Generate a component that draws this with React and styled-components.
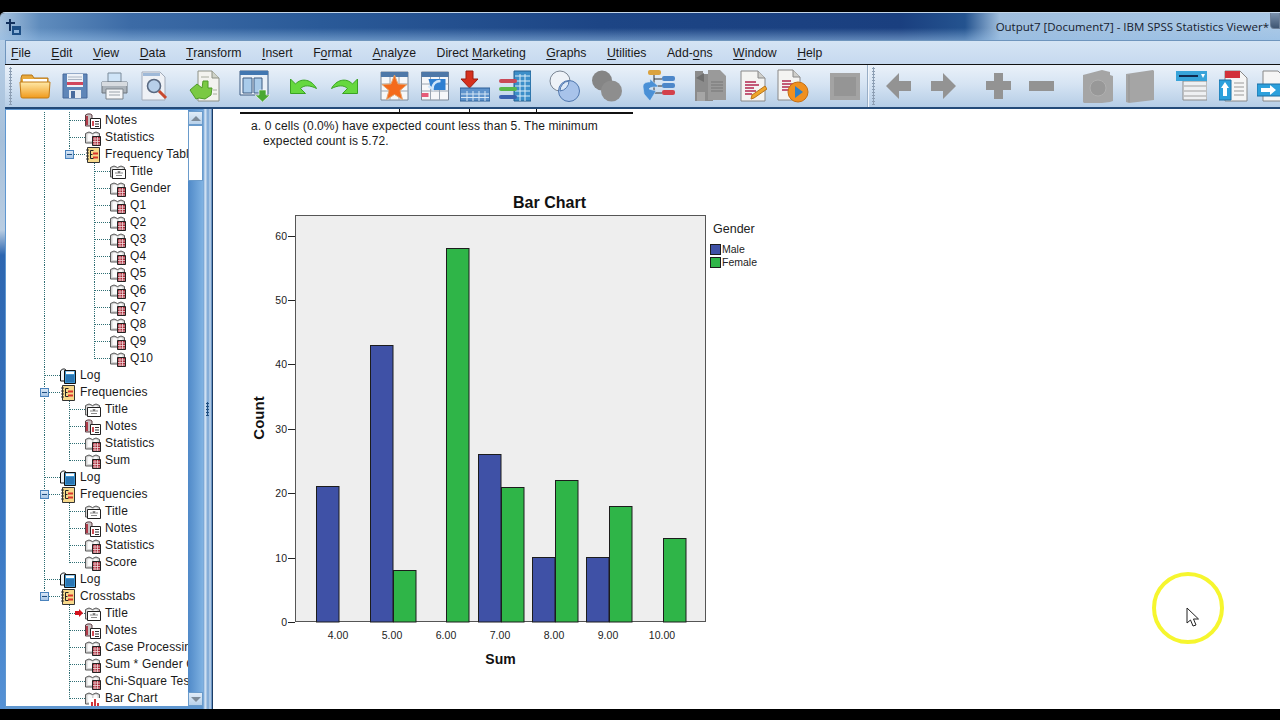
import React from "react";
import styled, { createGlobalStyle } from "styled-components";

const GlobalStyle = createGlobalStyle`
  html, body { margin: 0; padding: 0; background: #000; }
  * { box-sizing: border-box; }
`;

/* ---------- toolbar drawings ---------- */

const Folder = () => (
  <svg width="32" height="28" viewBox="0 0 32 28">
    <defs>
      <linearGradient id="fo" x1="0" y1="0" x2="0" y2="1">
        <stop offset="0" stopColor="#ffe9a8" />
        <stop offset="1" stopColor="#f09a1c" />
      </linearGradient>
    </defs>
    <path d="M2 6l1-3h10l2 3h14v5H2z" fill="#e8a93c" stroke="#b5761a" />
    <path d="M4 7h24v3H4z" fill="#fff" />
    <path d="M1 10h30l-1 15q0 1-2 1H4q-2 0-2-1z" fill="url(#fo)" stroke="#c47c15" />
  </svg>
);
const Save = () => (
  <svg width="26" height="28" viewBox="0 0 26 28">
    <path d="M1 2h24v24H1z" fill="#5f86b8" stroke="#47689a" />
    <path d="M5 2h16v13H5z" fill="#eef2f7" />
    <path d="M5 10h16v3H5z" fill="#d2475c" />
    <path d="M6 5h14M6 7.500h14" stroke="#aab5c4" />
    <path d="M7 18h12v8H7z" fill="#e6ebf2" />
    <path d="M9 19h4v7H9z" fill="#4a6c9e" />
  </svg>
);
const Printer = () => (
  <svg width="27" height="28" viewBox="0 0 27 28">
    <path d="M7 1h13v9H7z" fill="#cfe4f7" stroke="#7b8a99" />
    <path d="M1 10h25v11H1z" fill="#aab2ba" stroke="#6c747c" />
    <path d="M1 10h25v4H1z" fill="#d7dbe0" />
    <path d="M5 17h17v10H5z" fill="#f5f6f8" stroke="#7d858d" />
    <path d="M8 20h11M8 23h11" stroke="#9aa2aa" />
  </svg>
);
const Preview = () => (
  <svg width="27" height="30" viewBox="0 0 27 30">
    <path d="M1 1h18l5 5v23H1z" fill="#eef1f6" stroke="#a2abb9" />
    <path d="M2 2h17v3H2z" fill="#9fb9d8" />
    <circle cx="13" cy="15" r="6.500" fill="#b7cfe9" stroke="#5a6a82" strokeWidth="1.600" />
    <path d="M18 20l7 7" stroke="#c8492e" strokeWidth="3" />
  </svg>
);
const ExportDoc = () => (
  <svg width="32" height="32" viewBox="0 0 32 32">
    <path d="M9 1h14l7 7v23H9z" fill="#f3f3ef" stroke="#8d9186" />
    <path d="M23 1v7h7" fill="#cfd3c8" stroke="#8d9186" />
    <path d="M14 11h5v7h4l-1 7-6 4-6-1-3 1-6-9 7-6 5 4z" fill="#7ac943" stroke="#4f9a28" />
    <path d="M24 20h4M24 24h4M12 7h8" stroke="#a8ac9f" />
  </svg>
);
const Designate = () => (
  <svg width="31" height="32" viewBox="0 0 31 32">
    <path d="M1 1h28v24H1z" fill="#e9f0f8" stroke="#3c5a80" />
    <path d="M1 1h28v4H1z" fill="#4176b0" />
    <path d="M4 8h9v15H4zM15 8h8v15h-8z" fill="#a9cbea" stroke="#3c5a80" />
    <path d="M20 20h7v5h4l-7.500 7L16 25h4z" fill="#4aa832" stroke="#fff" strokeWidth=".6" />
  </svg>
);
const Undo = () => (
  <svg width="27" height="18" viewBox="0 0 27 18">
    <path d="M.5 2v14.500h15l-5-5c4-4 10-3 16 0C22 3 12 0 5.500 7z" fill="#66d83f" stroke="#3aa322" />
  </svg>
);
const Redo = () => (
  <svg width="27" height="18" viewBox="0 0 27 18">
    <path d="M26.500 2v14.500h-15l5-5c-4-4-10-3-16 0C5 3 15 0 21.500 7z" fill="#66d83f" stroke="#3aa322" />
  </svg>
);
const TableBase = () => (
  <>
    <path d="M1 1h27v28H1z" fill="#f6f7f9" stroke="#7b8797" />
    <path d="M1 1h27v5H1z" fill="#4e78a8" />
    <path d="M1 13h27M1 20h27M10 6v23M19 6v23" stroke="#9aa5b2" />
  </>
);
const StarTable = () => (
  <svg width="29" height="30" viewBox="0 0 29 30">
    <TableBase />
    <path d="M14.500 4l3.500 9 9 .5-7 6 2.500 9-8-5-8 5 2.500-9-7-6 9-.5z" fill="#f46a1c" stroke="#e2a36d" />
  </svg>
);
const GotoTable = () => (
  <svg width="30" height="30" viewBox="0 0 29 30">
    <TableBase />
    <path d="M8 8h17v11H11z" fill="#2f7fd1" />
    <path d="M20 10c-5 0-8 3-8 8l-4-3" fill="none" stroke="#cfe5fa" strokeWidth="2.500" />
    <path d="M1 22h7v4H1z" fill="#e65a78" />
  </svg>
);
const InsertTable = () => (
  <svg width="30" height="32" viewBox="0 0 30 32">
    <path d="M6 1h7v8h5l-8.500 9L1 9h5z" fill="#d5301d" stroke="#9d1c10" />
    <path d="M0 18h30v13H0z" fill="#5e93cc" stroke="#2c5f96" />
    <path d="M1 24h28M1 27.500h28M7 21v10M13 21v10M19 21v10M25 21v10" stroke="#d8e8f6" />
  </svg>
);
const ListTable = () => (
  <svg width="32" height="32" viewBox="0 0 32 32">
    <path d="M15 1h17v30H15z" fill="#3c8fc9" stroke="#245f8e" />
    <path d="M16 6h15M16 11h15M16 16h15M16 21h15M16 26h15M21 4v27M26 4v27" stroke="#d9eef9" />
    <rect x="0" y="9" width="18" height="4" rx="2" fill="#c94a58" />
    <rect x="0" y="17" width="18" height="4" rx="2" fill="#58b84a" />
    <rect x="0" y="25" width="18" height="4" rx="2" fill="#3a62b0" />
  </svg>
);
const Circles = () => (
  <svg width="31" height="32" viewBox="0 0 31 32">
    <circle cx="11" cy="11" r="10" fill="#eef2f8" stroke="#7b8593" />
    <circle cx="20" cy="21" r="10.500" fill="#a8c3ea" stroke="#5077ad" />
    <path d="M11 21a10 10 0 0 1 9-10 10 10 0 0 1-9 10z" fill="#dce8f7" stroke="#5077ad" />
  </svg>
);
const GrayCircles = () => (
  <svg width="30" height="32" viewBox="0 0 30 32">
    <circle cx="10" cy="10.500" r="10" fill="#858585" />
    <circle cx="19.500" cy="21" r="10.500" fill="#8e8e8e" />
  </svg>
);
const FlowIcon = () => (
  <svg width="34" height="34" viewBox="0 0 34 34">
    <rect x="6" y="1" width="13" height="5" rx="2" fill="#dba23e" />
    <path d="M12 6v18M12 10h8M12 17h8M12 24h8" stroke="#333" fill="none" />
    <rect x="20" y="7" width="13" height="5" rx="2" fill="#4d87c9" />
    <rect x="20" y="14" width="13" height="5" rx="2" fill="#4d87c9" />
    <rect x="20" y="21" width="13" height="5" rx="2" fill="#d3404a" />
    <path d="M1 18c0-4 3-5 7-5v-3l8 7-1 1c-3 0-7 0-8 2l7 2-6 10-6-7z" fill="#4a90d6" stroke="#cfe2f5" strokeWidth=".6" />
  </svg>
);
const GrayDoc = () => (
  <svg width="31" height="32" viewBox="0 0 31 32">
    <path d="M0 1h8v30H0zM8 4h10v27H8z" fill="#8b8b8b" />
    <path d="M13 0h12l6 6v24H13z" fill="#9a9a9a" />
    <path d="M16 12h12M16 15h12M16 18h12M16 21h12" stroke="#777" />
    <path d="M2 22h8v9H2z" fill="#a6a6a6" />
    <path d="M1 8l8-5v9z" fill="#6e6e6e" />
  </svg>
);
const PencilDoc = () => (
  <svg width="27" height="32" viewBox="0 0 27 32">
    <path d="M1 1h17l7 7v23H1z" fill="#f4f4f2" stroke="#888" />
    <path d="M18 1v7h7" fill="#cfcfcb" stroke="#888" />
    <path d="M5 12h11M5 15h14M5 18h9M5 21h11M5 24h7" stroke="#b3274f" strokeWidth="1.500" />
    <path d="M12 25l13-9 2 3-13 9-3 1z" fill="#f0a62a" stroke="#b8741a" />
  </svg>
);
const PlayDoc = () => (
  <svg width="32" height="34" viewBox="0 0 32 34">
    <path d="M1 1h15l7 7v23H1z" fill="#f4f4f2" stroke="#888" />
    <path d="M16 1v7h7" fill="#cfcfcb" stroke="#888" />
    <path d="M5 12h9M5 15h12M5 18h8M5 21h9" stroke="#b3274f" strokeWidth="1.500" />
    <circle cx="21" cy="23" r="10" fill="#f09020" stroke="#c46f14" />
    <path d="M18 17l8 6-8 6z" fill="#2d80c8" />
  </svg>
);
const GraySquare = () => (
  <svg width="30" height="27" viewBox="0 0 30 27">
    <path d="M0 0h30v27H0z" fill="#a3a3a3" />
    <path d="M4 4h22v19H4z" fill="#959595" />
  </svg>
);
const ArrowLeft = () => (
  <svg width="25" height="26" viewBox="0 0 25 26">
    <path d="M0 13L13 0v8h12v10H13v8z" fill="#939393" />
  </svg>
);
const ArrowRight = () => (
  <svg width="25" height="26" viewBox="0 0 25 26">
    <path d="M25 13L12 0v8H0v10h12v8z" fill="#939393" />
  </svg>
);
const PlusIcon = () => (
  <svg width="25" height="26" viewBox="0 0 25 26">
    <path d="M8 0h9v8h8v9h-8v9H8v-9H0V8h8z" fill="#939393" />
  </svg>
);
const MinusIcon = () => (
  <svg width="25" height="10" viewBox="0 0 25 10">
    <path d="M0 0h25v10H0z" fill="#939393" />
  </svg>
);
const GrayBoxOpen = () => (
  <svg width="31" height="33" viewBox="0 0 31 33">
    <path d="M1 5l19-5 8 2v3l3 1v25l-3 1-8 1H2l-1-1z" fill="#a5a5a5" />
    <circle cx="16" cy="18" r="8" fill="#989898" stroke="#b0b0b0" />
  </svg>
);
const GrayBox = () => (
  <svg width="28" height="33" viewBox="0 0 28 33">
    <path d="M0 4l27-4 1 1v29l-25 3-3-1z" fill="#a5a5a5" />
    <path d="M3 5v27" stroke="#959595" />
  </svg>
);
const ListDoc = () => (
  <svg width="31" height="30" viewBox="0 0 31 30">
    <path d="M7 10h24v19H7z" fill="#eef0f2" stroke="#8b8b8b" />
    <path d="M8 15h22M8 20h22M8 25h22" stroke="#a0a0a0" />
    <path d="M0 0h31v10H0z" fill="#38a3d9" />
    <path d="M3 5h19" stroke="#10294f" strokeWidth="2" />
    <path d="M25 3h4l-2 4z" fill="#fff" />
  </svg>
);
const UpDoc = () => (
  <svg width="29" height="32" viewBox="0 0 29 32">
    <path d="M6 1h15l7 7v23H6z" fill="#f5f5f5" stroke="#888" />
    <path d="M6 1h15v7H6z" fill="#d2313a" />
    <path d="M15 13h10M15 17h10M15 21h10M15 25h10" stroke="#999" />
    <path d="M0 10h12v20H0z" fill="#2ca0dc" stroke="#1c6ea3" />
    <path d="M6 12l4 6H8v8H4v-8H2z" fill="#fff" />
  </svg>
);
const RightDoc = () => (
  <svg width="32" height="32" viewBox="0 0 32 32">
    <path d="M6 1h15l7 7v23H6z" fill="#f5f5f5" stroke="#888" />
    <path d="M0 14h24v12H0z" fill="#2ca0dc" stroke="#1c6ea3" />
    <path d="M4 18h9v-3l6 5-6 5v-3H4z" fill="#fff" />
  </svg>
);

const toolsLeft = [
  { Icon: Folder, gap: 0 },
  { Icon: Save, gap: 11 },
  { Icon: Printer, gap: 13 },
  { Icon: Preview, gap: 13 },
  { Icon: ExportDoc, gap: 21 },
  { Icon: Designate, gap: 18 },
  { Icon: Undo, gap: 20 },
  { Icon: Redo, gap: 14 },
  { Icon: StarTable, gap: 22 },
  { Icon: GotoTable, gap: 11 },
  { Icon: InsertTable, gap: 10 },
  { Icon: ListTable, gap: 9 },
  { Icon: Circles, gap: 18 },
  { Icon: GrayCircles, gap: 12 },
  { Icon: FlowIcon, gap: 20 },
  { Icon: GrayDoc, gap: 19 },
  { Icon: PencilDoc, gap: 14 },
  { Icon: PlayDoc, gap: 10 },
  { Icon: GraySquare, gap: 21 },
];

const toolsRight = [
  { Icon: ArrowLeft, gap: 0 },
  { Icon: ArrowRight, gap: 20 },
  { Icon: PlusIcon, gap: 30 },
  { Icon: MinusIcon, gap: 18 },
  { Icon: GrayBoxOpen, gap: 28 },
  { Icon: GrayBox, gap: 13 },
  { Icon: ListDoc, gap: 22 },
  { Icon: UpDoc, gap: 12 },
  { Icon: RightDoc, gap: 9 },
];

/* ---------- tree drawings ---------- */

const Book = () => (
  <>
    <path d="M.5 13V3.500q3.500-3 7 0 3.500-3 7 0V13z" fill="#d4d4d4" stroke="#5a5a5a" />
    <path d="M2.500 11V4.500q2.500-1.500 4.500 0V11zM8.500 7V4.500q2-1.500 4 0V7z" fill="#fafafa" />
  </>
);

const StatIcon = () => (
  <svg width="16" height="16" viewBox="0 0 16 16">
    <Book />
    <path d="M7.500 6.500h8v9h-8z" fill="#a82c3a" stroke="#222" />
    <path d="M8 9h7M8 11.500h7M8 14h7M10 7v8M12.500 7v8" stroke="#f3d8da" strokeWidth=".8" />
  </svg>
);
const NotesIcon = () => (
  <svg width="16" height="16" viewBox="0 0 16 16">
    <path d="M.5 2C2 .5 6 .5 7 2v11H.5z" fill="#c9c2c4" stroke="#5c3a40" />
    <path d="M1 3h2v9H1z" fill="#b03a48" />
    <path d="M5.500 5.500h10v10h-10z" fill="#fff" stroke="#222" />
    <path d="M8 8v5" stroke="#c5202a" strokeWidth="1.600" />
    <path d="M10 8.500h4M10 11h4M10 13.500h4" stroke="#333" />
  </svg>
);
const TitleIcon = () => (
  <svg width="16" height="16" viewBox="0 0 16 16">
    <Book />
    <path d="M2.500 5.500h13v9h-13z" fill="#fff" stroke="#222" />
    <path d="M5 9h8M6 11.500h6" stroke="#8a8a8a" />
    <path d="M8 7l1 2 1-2" stroke="#666" fill="none" />
  </svg>
);
const ChartIcon = () => (
  <svg width="16" height="16" viewBox="0 0 16 16">
    <Book />
    <path d="M4 7h11v8.500H4z" fill="#fff" />
    <path d="M6 11h2v4.500H6zM9 8h2v7.500H9zM12 12h2v3.500h-2z" fill="#d2353a" />
  </svg>
);
const LogIcon = () => (
  <svg width="16" height="16" viewBox="0 0 16 16">
    <path d="M.5 3C2 .5 5 .5 6 2v11H.5z" fill="#eef4f9" stroke="#111" />
    <path d="M4.500 2.500h11v13h-11z" fill="#3f97d3" stroke="#111" />
    <path d="M6 3.500h8v2.500H6z" fill="#fff" />
    <path d="M6 7h8v7H6z" fill="#2a76b4" />
  </svg>
);
const GroupIcon = () => (
  <svg width="16" height="16" viewBox="0 0 16 16">
    <path d="M2.500.5h12v15h-12z" fill="#f7d98a" stroke="#333" />
    <path d="M1 3h3M1 6h3M1 9h3M1 12h3" stroke="#333" />
    <path d="M5.500 3.500v8h3M5.500 3.500h3M5.500 7.500h2" stroke="#222" fill="none" />
    <path d="M8 5.500h5v2H8zM8 9.500h5v2H8z" fill="#d8342b" />
  </svg>
);

const t = (label, Icon, level, extra = {}) => ({ label, Icon, level, trunk: true, ...extra });
const stats = (label) => t(label, StatIcon, 3);

const treeRows = [
  t("Notes", NotesIcon, 2),
  t("Statistics", StatIcon, 2),
  t("Frequency Table", GroupIcon, 2, { toggle: true, last: true }),
  t("Title", TitleIcon, 3),
  stats("Gender"),
  stats("Q1"),
  stats("Q2"),
  stats("Q3"),
  stats("Q4"),
  stats("Q5"),
  stats("Q6"),
  stats("Q7"),
  stats("Q8"),
  stats("Q9"),
  t("Q10", StatIcon, 3, { last: true }),
  t("Log", LogIcon, 1),
  t("Frequencies", GroupIcon, 1, { toggle: true }),
  t("Title", TitleIcon, 2),
  t("Notes", NotesIcon, 2),
  t("Statistics", StatIcon, 2),
  t("Sum", StatIcon, 2, { last: true }),
  t("Log", LogIcon, 1),
  t("Frequencies", GroupIcon, 1, { toggle: true }),
  t("Title", TitleIcon, 2),
  t("Notes", NotesIcon, 2),
  t("Statistics", StatIcon, 2),
  t("Score", StatIcon, 2, { last: true }),
  t("Log", LogIcon, 1),
  t("Crosstabs", GroupIcon, 1, { toggle: true, last: true }),
  t("Title", TitleIcon, 2, { trunk: false, active: true }),
  t("Notes", NotesIcon, 2, { trunk: false }),
  t("Case Processing Summary", StatIcon, 2, { trunk: false }),
  t("Sum * Gender Crosstabulation", StatIcon, 2, { trunk: false }),
  t("Chi-Square Tests", StatIcon, 2, { trunk: false }),
  t("Bar Chart", ChartIcon, 2, { trunk: false, last: true }),
];

/* ---------- chart data ---------- */

const yTicks = [
  { v: 0, y: 622 },
  { v: 10, y: 558 },
  { v: 20, y: 493 },
  { v: 30, y: 429 },
  { v: 40, y: 364 },
  { v: 50, y: 300 },
  { v: 60, y: 236 },
];
const xLabels = ["4.00", "5.00", "6.00", "7.00", "8.00", "9.00", "10.00"];
const bars = [
  { x: 316, top: 486, color: "#3f51a6" },
  { x: 370, top: 345, color: "#3f51a6" },
  { x: 393, top: 570, color: "#2fb548" },
  { x: 446, top: 248, color: "#2fb548" },
  { x: 478, top: 454, color: "#3f51a6" },
  { x: 501, top: 487, color: "#2fb548" },
  { x: 532, top: 557, color: "#3f51a6" },
  { x: 555, top: 480, color: "#2fb548" },
  { x: 586, top: 557, color: "#3f51a6" },
  { x: 609, top: 506, color: "#2fb548" },
  { x: 663, top: 538, color: "#2fb548" },
];

const BarChart = () => (
  <ChartSvg width="530" height="480" viewBox="240 190 530 480">
    <text x="549.500" y="208" textAnchor="middle" fontSize="16" fontWeight="700">
      Bar Chart
    </text>
    <rect x="295.500" y="215.500" width="410" height="406" fill="#eeeeee" stroke="#555" />
    {yTicks.map((tick) => (
      <g key={tick.v}>
        <path d={`M288 ${tick.y}.5h7`} stroke="#222" />
        <text x="287" y={tick.y + 4} textAnchor="end" fontSize="10.500" fill="#222">
          {tick.v}
        </text>
      </g>
    ))}
    {bars.map((bar) => (
      <rect
        key={bar.x}
        x={bar.x + 0.5}
        y={bar.top + 0.5}
        width="22.500"
        height={621.5 - bar.top}
        fill={bar.color}
        stroke="#1c1c1c"
      />
    ))}
    {xLabels.map((label, i) => (
      <text key={label} x={338 + i * 54} y="639" textAnchor="middle" fontSize="10.500" fill="#222">
        {label}
      </text>
    ))}
    <text x="500.500" y="664" textAnchor="middle" fontSize="14" fontWeight="700">
      Sum
    </text>
    <text
      transform="translate(264 418) rotate(-90)"
      textAnchor="middle"
      fontSize="15"
      fontWeight="700"
    >
      Count
    </text>
    <text x="713" y="233" fontSize="12.500" fill="#222">Gender</text>
    <rect x="710.500" y="244.500" width="10" height="10" fill="#3f51a6" stroke="#1c1c1c" />
    <text x="722" y="253" fontSize="10.500" fill="#222">Male</text>
    <rect x="710.500" y="257.500" width="10" height="10" fill="#2fb548" stroke="#1c1c1c" />
    <text x="722" y="266" fontSize="10.500" fill="#222">Female</text>
  </ChartSvg>
);

/* ---------- page ---------- */

const menu = [
  ["", "F", "ile"],
  ["", "E", "dit"],
  ["", "V", "iew"],
  ["", "D", "ata"],
  ["", "T", "ransform"],
  ["", "I", "nsert"],
  ["F", "o", "rmat"],
  ["", "A", "nalyze"],
  ["Direct ", "M", "arketing"],
  ["", "G", "raphs"],
  ["", "U", "tilities"],
  ["Add-", "o", "ns"],
  ["", "W", "indow"],
  ["", "H", "elp"],
];

const TreeRow = ({ row }) => {
  const { label, Icon, level, trunk, toggle, last, active } = row;
  return (
    <Row>
      {level > 1 && <Guide $on={trunk} />}
      {level > 2 && <Guide $on={false} />}
      <Elbow $last={last}>
        {toggle && <Toggle />}
        {active && <ActiveArrow />}
      </Elbow>
      <RowIcon>
        <Icon />
      </RowIcon>
      <RowLabel>{label}</RowLabel>
    </Row>
  );
};

const Toolset = ({ tools }) =>
  tools.map(({ Icon, gap }, i) => (
    <Tool key={i} $gap={gap}>
      <Icon />
    </Tool>
  ));

export default function App() {
  return (
    <>
      <GlobalStyle />
      <Screen>
        <Window>
          <TitleBar>
            <AppIcon viewBox="0 0 18 18" width="18" height="18">
              <path d="M1 5h9M5 1v12" stroke="#12305c" strokeWidth="2" />
              <path d="M7 8h9v9H7z" fill="#1d4f86" />
              <path d="M9 12h5v3H9z" fill="#8fb4da" />
            </AppIcon>
            <TitleText>Output7 [Document7] - IBM SPSS Statistics Viewer*</TitleText>
            <CaptionButton />
          </TitleBar>
          <Frame>
            <MenuBar>
              {menu.map(([before, key, after]) => (
                <MenuItem key={before + key + after}>
                  {before}
                  <Mnemonic>{key}</Mnemonic>
                  {after}
                </MenuItem>
              ))}
            </MenuBar>
            <Toolbar>
              <Grip />
              <Toolset tools={toolsLeft} />
              <ToolDivider />
              <Grip $second />
              <Toolset tools={toolsRight} />
            </Toolbar>
            <Workspace>
              <TreePane>
                <Tree>
                  {treeRows.map((row, i) => (
                    <TreeRow key={i} row={row} />
                  ))}
                </Tree>
                <ScrollBar>
                  <ScrollButton>
                    <ScrollArrow />
                  </ScrollButton>
                  <ScrollThumb />
                  <ScrollTrack />
                  <ScrollButton>
                    <ScrollArrow $down />
                  </ScrollButton>
                </ScrollBar>
              </TreePane>
              <Splitter>
                <SplitDots />
              </Splitter>
              <OutputPane>
                <TableEnd>
                  <TableCell $w={160} />
                  <TableCell $w={70} />
                  <TableCell $w={67} />
                  <TableCell $w={96} $end />
                </TableEnd>
                <Footnote>
                  a. 0 cells (0.0%) have expected count less than 5. The minimum
                  <br />
                  expected count is 5.72.
                </Footnote>
                <BarChart />
                <CursorRing />
                <Cursor width="14" height="21" viewBox="0 0 14 21">
                  <path
                    d="M1 1v15l3.500-3 2.500 6 3-1-2.500-6H12.500z"
                    fill="#fff"
                    stroke="#222"
                  />
                </Cursor>
              </OutputPane>
            </Workspace>
          </Frame>
        </Window>
      </Screen>
    </>
  );
}

const Screen = styled.div`
  width: 1280px;
  height: 720px;
  padding: 12px 0 11px;
  background: #000;
  overflow: hidden;
`;

const Window = styled.div`
  height: 100%;
  display: flex;
  flex-direction: column;
  border-top: 1px solid #c4d6e8;
  border-radius: 5px 0 0 0;
  overflow: hidden;
`;

const TitleBar = styled.div`
  position: relative;
  flex: 0 0 27px;
  display: flex;
  align-items: center;
  justify-content: space-between;
  padding: 0 11px 0 5px;
  background:
    linear-gradient(180deg, rgba(30, 65, 125, 0) 55%, rgba(150, 190, 230, 0.55) 100%),
    linear-gradient(
      90deg,
      #a6c2de 0,
      #5f8cbd 40px,
      #3c6ba6 130px,
      #2a5a98 320px,
      #1d4585 600px,
      #1a3f7f 900px,
      #24538f 965px,
      #9fbedd 1000px,
      #a9c8e6 1280px
    );
`;

const AppIcon = styled.svg`
  flex: none;
`;

const TitleText = styled.span`
  font: 11.500px "Open Sans", sans-serif;
  color: #15202e;
`;

const CaptionButton = styled.div`
  position: absolute;
  right: 0;
  top: -1px;
  width: 10px;
  height: 17px;
  border: 1px solid #6d8098;
  border-top: 0;
  border-radius: 0 0 0 4px;
  background: linear-gradient(180deg, #7f95b0, #3e5572);
`;

const Frame = styled.div`
  flex: 1;
  min-height: 0;
  display: flex;
  flex-direction: column;
  padding-left: 5px;
  background: linear-gradient(
    180deg,
    #b7cfe7 0,
    #a7c0da 100px,
    #b9cde2 190px,
    #2d66b0 215px,
    #3a78c4 500px,
    #5a96d8 697px
  );
`;

const MenuBar = styled.nav`
  flex: 0 0 24px;
  display: flex;
  align-items: center;
  gap: 20.500px;
  padding-left: 5px;
  border-top: 1px solid #6f95bd;
  border-left: 1px solid #6f95bd;
  background: linear-gradient(180deg, #d5e4f4, #c6d9ef);
`;

const MenuItem = styled.span`
  font: 12.250px "Liberation Sans", sans-serif;
  color: #1a1a1a;
  white-space: nowrap;
`;

const Mnemonic = styled.u`
  text-underline-offset: 2px;
`;

const Toolbar = styled.div`
  flex: 0 0 45px;
  display: flex;
  align-items: center;
  overflow: hidden;
  padding-left: 4px;
  border-top: 1px solid #111;
  border-bottom: 2px solid #234a78;
  background: linear-gradient(180deg, #eaf1f9 0, #d6e4f3 45%, #b5cde6 100%);
`;

const Grip = styled.div`
  flex: none;
  width: 3px;
  height: 38px;
  margin: ${(p) => (p.$second ? "0 11px 0 3px" : "0 7px 0 0")};
  background-image: radial-gradient(circle, #8d9fb4 1px, transparent 1.200px);
  background-size: 3px 3px;
`;

const Tool = styled.div`
  flex: none;
  display: flex;
  margin-left: ${(p) => p.$gap}px;
`;

const ToolDivider = styled.div`
  flex: none;
  width: 2px;
  height: 42px;
  margin-left: 7px;
  background: #98aec6;
  border-right: 1px solid #f2f6fb;
`;

const Workspace = styled.div`
  flex: 1;
  min-height: 0;
  display: flex;
`;

const TreePane = styled.div`
  flex: 0 0 198px;
  min-width: 0;
  min-height: 0;
  display: flex;
  padding: 1px 0 3px 1px;
  background: #5f97d0;
`;

const Tree = styled.div`
  flex: 1;
  min-width: 0;
  padding: 2px 0 0 38px;
  overflow: hidden;
  background: #fff;
`;

const Row = styled.div`
  display: flex;
  height: 17px;
`;

const dotted = "#2f6f74";

const Guide = styled.div`
  flex: 0 0 25px;
  border-left: 1px ${(p) => (p.$on ? `dotted ${dotted}` : "none")};
`;

const Elbow = styled.div`
  position: relative;
  flex: 0 0 16px;
  &::before {
    content: "";
    position: absolute;
    left: 0;
    top: 0;
    height: ${(p) => (p.$last ? "9px" : "100%")};
    border-left: 1px dotted ${dotted};
  }
  &::after {
    content: "";
    position: absolute;
    left: 0;
    right: 0;
    top: 8px;
    border-top: 1px dotted ${dotted};
  }
`;

const Toggle = styled.div`
  position: absolute;
  z-index: 1;
  left: -4px;
  top: 4px;
  width: 9px;
  height: 9px;
  border: 1px solid #4a83bd;
  background: linear-gradient(#d9e7f6, #a8c6e6);
  &::after {
    content: "";
    position: absolute;
    left: 1px;
    right: 1px;
    top: 3px;
    height: 1px;
    background: #1f4f82;
  }
`;

const ActiveArrow = styled.div`
  position: absolute;
  z-index: 1;
  left: 6px;
  top: 6px;
  width: 4px;
  height: 4px;
  background: #d2121c;
  &::after {
    content: "";
    position: absolute;
    left: 4px;
    top: -2px;
    border: 4px solid transparent;
    border-left-color: #d2121c;
    border-right: 0;
  }
`;

const RowIcon = styled.div`
  flex: 0 0 16px;
  display: flex;
  align-items: center;
`;

const RowLabel = styled.span`
  margin-left: 4px;
  font: 12px/17px "Liberation Sans", sans-serif;
  letter-spacing: 0.15px;
  color: #1a1a1a;
  white-space: nowrap;
`;

const ScrollBar = styled.div`
  flex: 0 0 15px;
  display: flex;
  flex-direction: column;
  padding-top: 1px;
  background: linear-gradient(90deg, #4f89c8, #7fb2e2);
`;

const ScrollButton = styled.div`
  flex: 0 0 14px;
  display: flex;
  align-items: center;
  justify-content: center;
  background: linear-gradient(180deg, #e0ecf8, #b8d1ea);
  border: 1px solid #6a9bcb;
`;

const ScrollArrow = styled.div`
  border: 5px solid transparent;
  border-top: ${(p) => (p.$down ? "5px solid #7d8b99" : "0")};
  border-bottom: ${(p) => (p.$down ? "0" : "5px solid #7d8b99")};
`;

const ScrollThumb = styled.div`
  flex: 0 0 56px;
  background: #fff;
  border: 1px solid #6a9bcb;
`;

const ScrollTrack = styled.div`
  flex: 1;
`;

const Splitter = styled.div`
  flex: 0 0 9px;
  display: flex;
  align-items: center;
  justify-content: center;
  background: linear-gradient(
    90deg,
    #5f97d0 0,
    #cfe0f2 2px,
    #cfe0f2 3px,
    #86aed8 4px,
    #86aed8 6px,
    #cfe0f2 7px,
    #4c7fb7 9px
  );
`;

const SplitDots = styled.div`
  width: 3px;
  height: 14px;
  background-image: radial-gradient(circle, #1f4f82 1px, transparent 1.200px);
  background-size: 3px 3px;
`;

const OutputPane = styled.main`
  position: relative;
  flex: 1;
  min-width: 0;
  overflow: hidden;
  background: #fff;
  border-left: 1px solid #1c3d66;
  padding-left: 27px;
`;

const TableEnd = styled.div`
  display: flex;
  height: 5px;
  width: 393px;
  border-bottom: 2px solid #111;
`;

const TableCell = styled.div`
  flex: 0 0 ${(p) => p.$w}px;
  border-right: ${(p) => (p.$end ? "0" : "1px solid #111")};
`;

const Footnote = styled.p`
  margin: 5px 0 0 11px;
  padding-left: 12px;
  text-indent: -12px;
  font: 12px/15px "Liberation Sans", sans-serif;
  letter-spacing: 0.1px;
  color: #1a1a1a;
`;

const ChartSvg = styled.svg`
  display: block;
  margin-top: 41px;
  font-family: "Liberation Sans", sans-serif;
  fill: #111;
`;

const CursorRing = styled.div`
  position: absolute;
  left: 939px;
  top: 463px;
  width: 72px;
  height: 72px;
  border: 4px solid #f6f62e;
  border-radius: 50%;
`;

const Cursor = styled.svg`
  position: absolute;
  left: 973px;
  top: 498px;
`;
